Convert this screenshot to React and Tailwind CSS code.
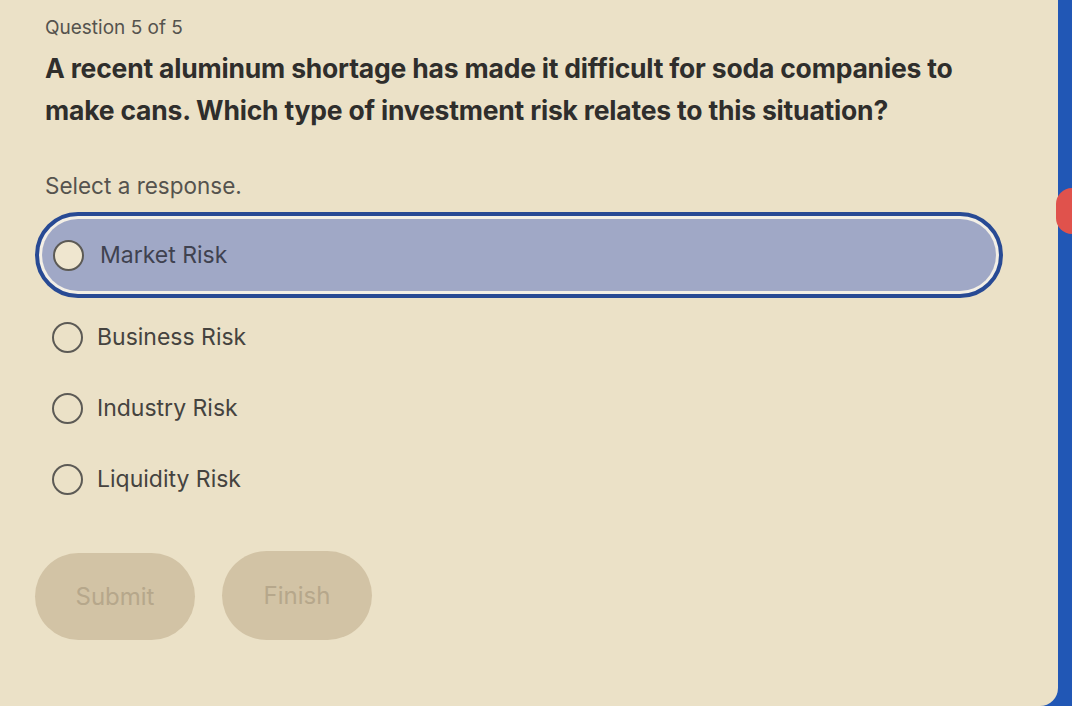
const options = ['Market Risk', 'Business Risk', 'Industry Risk', 'Liquidity Risk']

function Radio({ filled }) {
  return (
    <span
      className={`block w-[31px] h-[31px] shrink-0 rounded-full border-2 border-[#5c5a55] ${filled ? 'bg-[#efe6cf]' : 'bg-transparent'}`}
    />
  )
}

export default function App() {
  const selected = 0
  return (
    <div className="w-[1072px] h-[706px] flex bg-[#2157b5] overflow-hidden relative" style={{ fontFamily: 'Inter, "Open Sans", sans-serif' }}>
      <main className="flex-1 bg-[#ebe1c7] rounded-br-[18px] pl-[45px] pr-[40px] pt-[16px] text-[#3e3d3a]">
        <p className="text-[19px] leading-[24px] text-[#55534e]">Question 5 of 5</p>
        <h1 className="mt-[7px] max-w-[965px] text-[26.5px] leading-[42px] font-bold text-[#2f2e2c] tracking-[-0.2px]">
          A recent aluminum shortage has made it difficult for soda companies to make cans. Which type of investment risk relates to this situation?
        </h1>
        <p className="mt-[41px] text-[22.5px] leading-[28px] text-[#55534e]">Select a response.</p>

        <ul className="mt-[12px] -ml-[10px] w-[968px] flex flex-col">
          {options.map((label, i) =>
            i === selected ? (
              <li key={label} className="h-[86px] rounded-full border-[4px] border-[#284a94] p-[3px] bg-[#f3efe6]">
                <div className="h-full rounded-full bg-[#a0a8c6] flex items-center gap-[16px] pl-[11px]">
                  <Radio filled />
                  <span className="text-[23px] text-[#3f4250]">{label}</span>
                </div>
              </li>
            ) : (
              <li key={label} className={`h-[71px] flex items-center gap-[14px] pl-[17px] ${i === 1 ? 'mt-[4px]' : ''}`}>
                <Radio />
                <span className="text-[23px] text-[#45433f]">{label}</span>
              </li>
            )
          )}
        </ul>

        <div className="mt-[38px] -ml-[10px] flex gap-[27px]">
          <button className="w-[160px] h-[87px] rounded-full bg-[#d2c3a5] text-[24px] text-[#b6a78b]">Submit</button>
          <button className="w-[150px] h-[89px] -mt-[2px] rounded-full bg-[#d2c3a5] text-[24px] text-[#b6a78b]">Finish</button>
        </div>
      </main>
      <div className="w-[14px] shrink-0" />
      <span className="absolute right-[-16px] top-[188px] w-[32px] h-[46px] rounded-full bg-[#e0524c]" />
    </div>
  )
}
